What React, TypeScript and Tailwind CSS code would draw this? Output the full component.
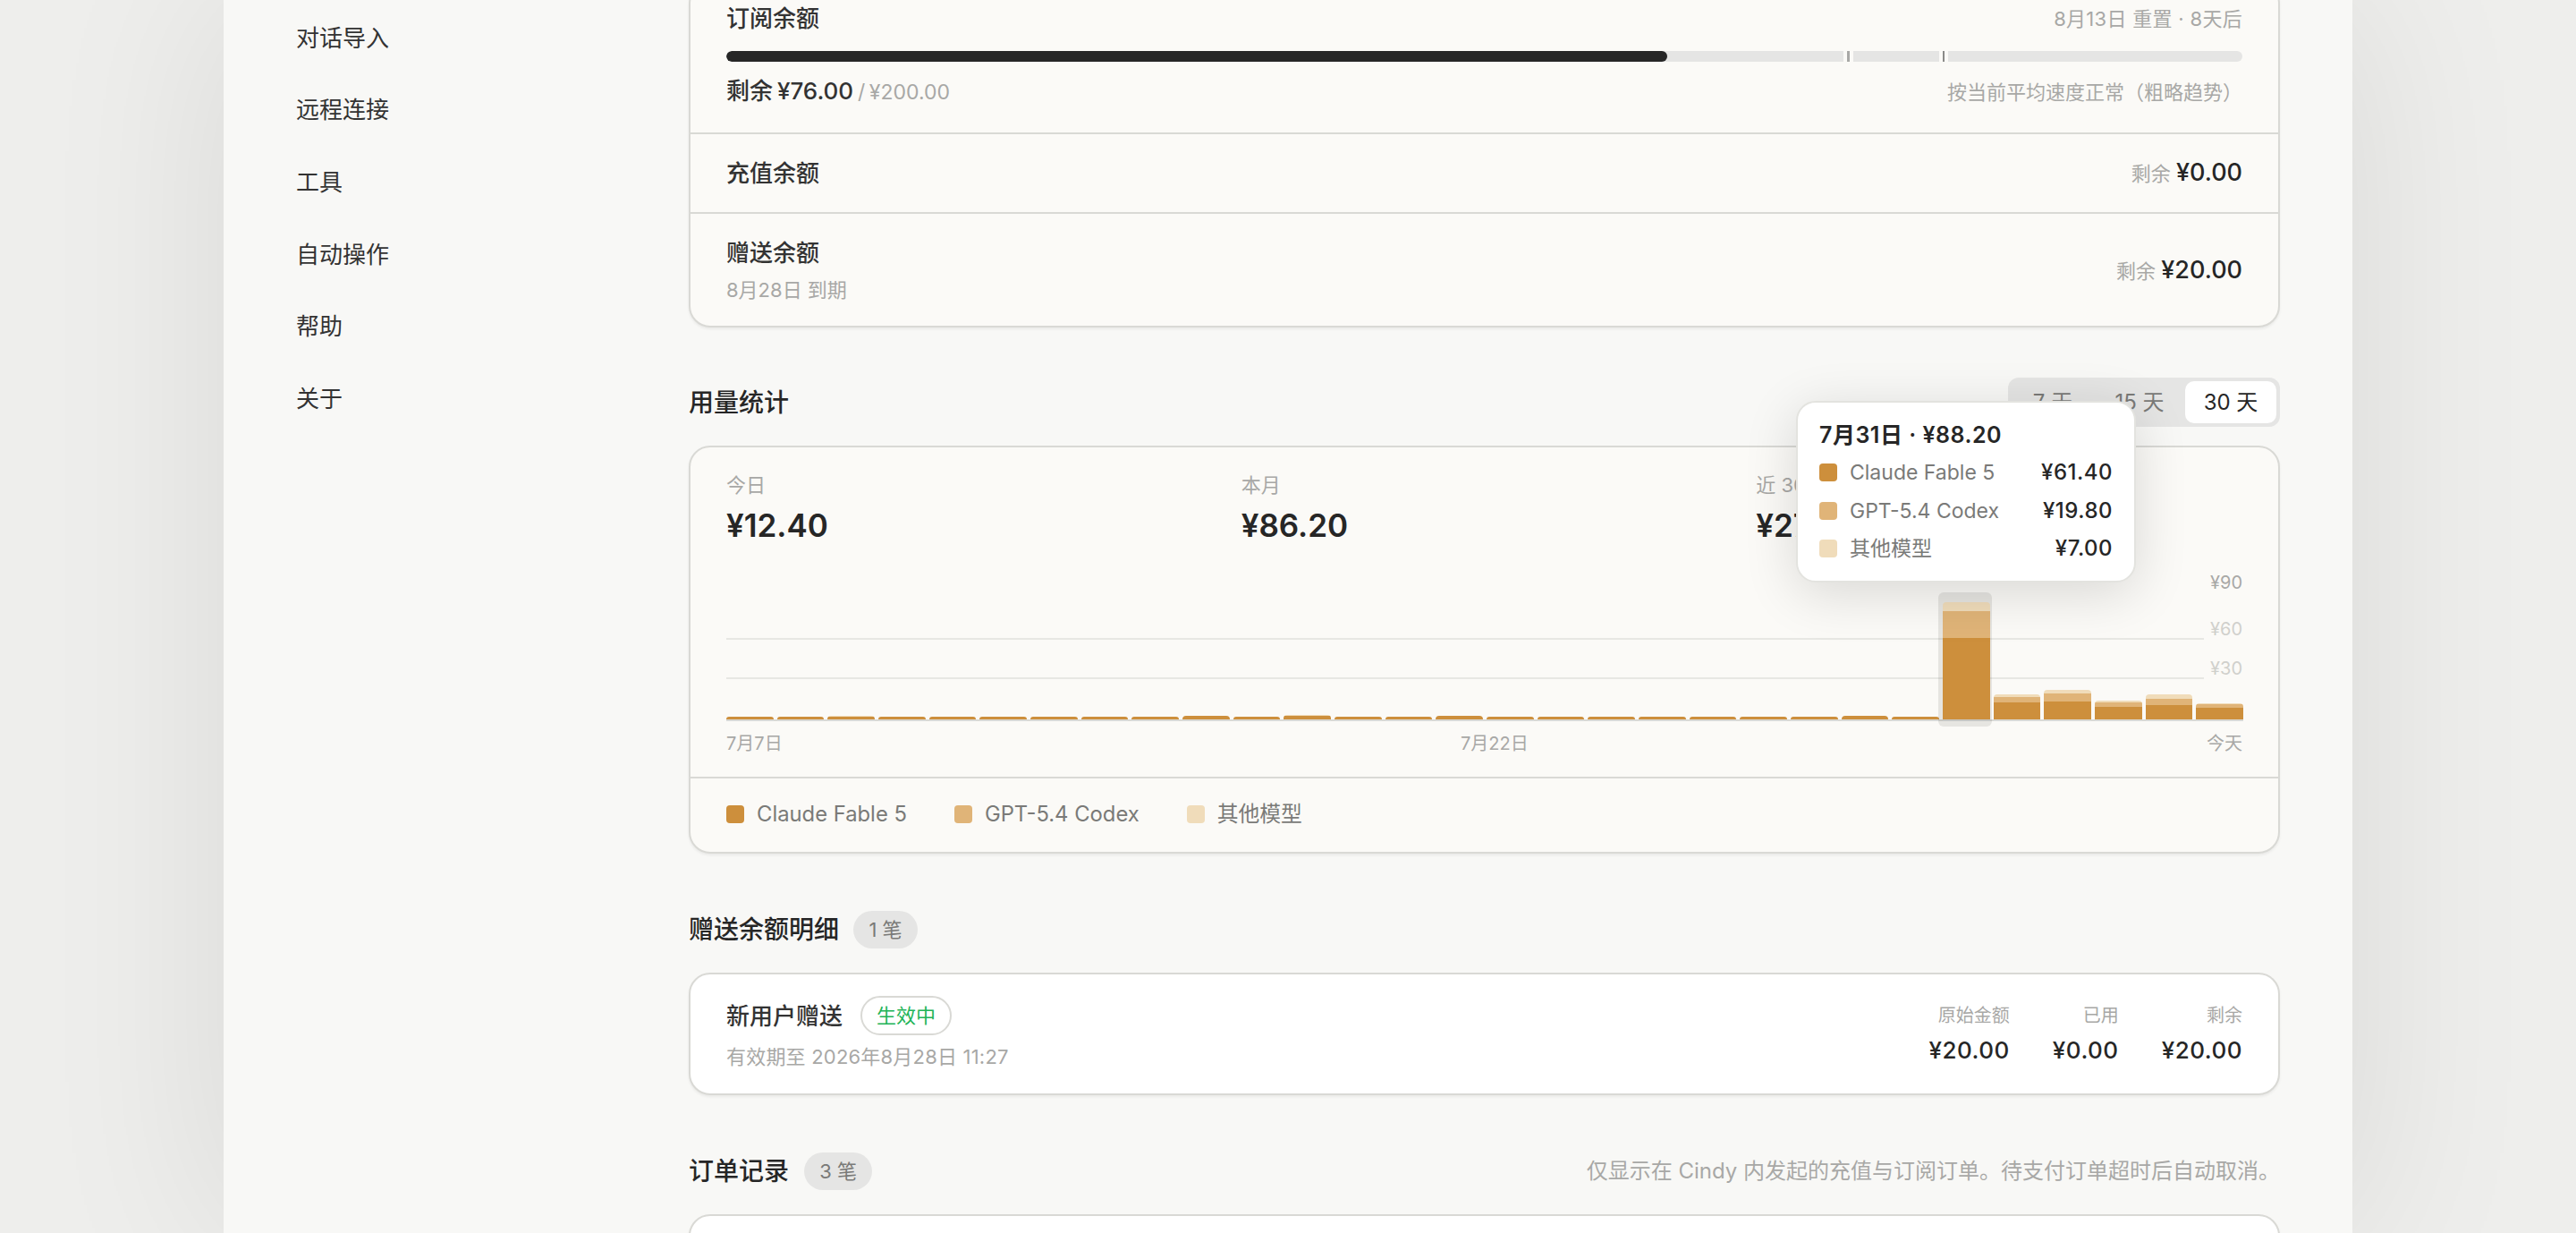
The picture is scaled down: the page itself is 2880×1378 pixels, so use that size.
import React from "react";

const navItems = ["对话导入", "远程连接", "工具", "自动操作", "帮助", "关于"];

// heights in px: claude, gpt, other
const dailyBars: number[][] = [
  [3, 0, 0], [3, 0, 0], [3, 0, 1.5], [3, 0, 0], [3, 0, 0], [3, 0, 0],
  [3, 0, 0], [3, 0, 0], [3, 0, 0], [4.5, 0, 0], [3, 0, 0], [4.5, 0, 1],
  [3, 0, 0], [3, 0, 0], [4.5, 0, 0], [3, 0, 0], [3, 0, 0], [3, 0, 0],
  [3, 0, 0], [3, 0, 0], [3, 0, 0], [3, 0, 0], [4.5, 0, 0], [3, 0, 0],
  [91, 30, 10], [19, 6, 3], [20, 9, 4], [14, 5, 2], [16, 7, 5], [13, 4, 1],
];

const legend = [
  { name: "Claude Fable 5", swatch: "bg-[#cd8f3c]", value: "¥61.40" },
  { name: "GPT-5.4 Codex", swatch: "bg-[#e0b478]", value: "¥19.80" },
  { name: "其他模型", swatch: "bg-[#f0dcba]", value: "¥7.00" },
];

const Card = ({ className = "", children }: { className?: string; children?: React.ReactNode }) => (
  <div className={`rounded-[24px] border-2 border-[#d9d9d5] shadow-[0_2px_3px_rgba(0,0,0,0.06)] ${className}`}>
    {children}
  </div>
);

const CountBadge = ({ text, width }: { text: string; width: string }) => (
  <span className={`flex h-[42px] items-center justify-center rounded-full bg-[#e5e5e4] text-[22px] text-[#7a7a78] ${width}`}>
    {text}
  </span>
);

const Stat = ({ label, value }: { label: string; value: string }) => (
  <div>
    <div className="text-[22px] leading-[30px] text-[#a8a8a6]">{label}</div>
    <div className="mt-[8px] text-[35px] font-semibold leading-[44px] text-[#262626]">{value}</div>
  </div>
);

const GiftColumn = ({ label, value }: { label: string; value: string }) => (
  <div className="text-right">
    <div className="text-[20px] leading-[30px] text-[#a8a8a6]">{label}</div>
    <div className="mt-[9px] text-[26px] font-medium leading-[30px] tracking-[0.5px] text-[#262626]">{value}</div>
  </div>
);

const UsageChart = () => (
  <div className="relative mt-[29px] h-[168px]">
    <div className="absolute left-0 right-[43px] top-[75px] h-[2px] bg-[#e7e7e3]" />
    <div className="absolute left-0 right-[43px] top-[119px] h-[2px] bg-[#e7e7e3]" />
    <span className="absolute right-0 top-[1px] text-[20px] leading-[24px] text-[#a8a8a6]">¥90</span>
    <span className="absolute right-0 top-[53px] text-[20px] leading-[24px] text-[#d0d0cc]">¥60</span>
    <span className="absolute right-0 top-[97px] text-[20px] leading-[24px] text-[#d0d0cc]">¥30</span>
    <div className="absolute inset-y-0 left-0 -right-[1px] flex items-end gap-[4px] border-b-2 border-[#d9d9d5]">
      {dailyBars.map((bar, i) => (
        <div key={i} className="relative flex-1">
          {i === 24 && (
            <div className="absolute -left-[5px] -right-[2px] -bottom-[8px] -top-[11px] rounded-[6px] bg-[#30342a]/[0.1]" />
          )}
          <div className="relative flex flex-col overflow-hidden rounded-t-[4px]">
            <div className="bg-[#f0dcba]" style={{ height: bar[2] }} />
            <div className="bg-[#e0b478]" style={{ height: bar[1] }} />
            <div className="bg-[#cd8f3c]" style={{ height: bar[0] }} />
          </div>
        </div>
      ))}
    </div>
  </div>
);

const UsageTooltip = () => (
  <div className="absolute left-[1758px] top-[448px] z-10 h-[203px] w-[380px] rounded-[22px] border-2 border-[#e3e3df] bg-white px-[24px] pt-[20px] shadow-[0_12px_60px_rgba(0,0,0,0.14)]">
    <div className="text-[25px] font-semibold leading-[32px] tracking-[0.5px] text-[#262626]">7月31日 · ¥88.20</div>
    <div className="mt-[5px] flex flex-col">
      {legend.map((item) => (
        <div key={item.name} className="flex h-[42.5px] items-center text-[23px]">
          <span className={`h-[20px] w-[20px] rounded-[4px] ${item.swatch}`} />
          <span className="ml-[14px] flex-1 text-[#7a7a78]">{item.name}</span>
          <span className="text-[24px] font-medium tracking-[0.5px] text-[#262626]">{item.value}</span>
        </div>
      ))}
    </div>
  </div>
);

export default function App() {
  return (
    <div className="h-[1378px] overflow-hidden bg-[#eeeeec] font-['Inter','Noto_Sans_CJK_SC',sans-serif]">
      <div className="relative ml-[250px] flex h-full w-[2380px] bg-[#f8f8f6] shadow-[0_0_200px_rgba(0,0,0,0.09)]">
        <nav className="w-[520px] pl-[81px] pt-[2px]">
          {navItems.map((item) => (
            <div key={item} className="flex h-[80.6px] items-center text-[26px] text-[#333333]">
              {item}
            </div>
          ))}
        </nav>

        <main className="-mt-[20px] w-[1779px]">
          <Card className="bg-[#fbfaf7]">
            <div className="px-[40px] pb-[27px] pt-[21px]">
              <div className="flex items-center justify-between leading-[36px]">
                <span className="text-[26px] font-medium text-[#333333]">订阅余额</span>
                <span className="text-[22px] tracking-[0.3px] text-[#a8a8a6]">8月13日 重置 · 8天后</span>
              </div>
              <div className="relative mt-[18px] flex h-[12px] overflow-hidden rounded-full bg-[#e5e5e4]">
                <div className="w-[1052px] rounded-full bg-[#262626]" />
                <span className="absolute left-[1249px] h-full w-[11px] bg-[#fbfaf7]" />
                <span className="absolute left-[1253px] h-full w-[3px] bg-[#a8a8a6]" />
                <span className="absolute left-[1356px] h-full w-[10px] bg-[#fbfaf7]" />
                <span className="absolute left-[1360px] h-full w-[2px] bg-[#8a8a88]" />
              </div>
              <div className="mt-[15px] flex items-center justify-between leading-[36px]">
                <span className="text-[26px] font-medium text-[#333333] [word-spacing:-2px]">
                  剩余 ¥76.00 <span className="text-[23px] font-normal text-[#a8a8a6]">/ ¥200.00</span>
                </span>
                <span className="text-[22px] text-[#a8a8a6]">按当前平均速度正常（粗略趋势）</span>
              </div>
            </div>
            <div className="flex h-[89px] items-center justify-between border-t-2 border-[#d9d9d5] px-[40px]">
              <span className="text-[26px] font-medium text-[#333333]">充值余额</span>
              <span className="text-[22px] text-[#a8a8a6]">
                剩余 <span className="text-[27px] font-medium text-[#262626]">¥0.00</span>
              </span>
            </div>
            <div className="flex items-center justify-between border-t-2 border-[#d9d9d5] px-[40px] pb-[25px] pt-[26px]">
              <div>
                <div className="text-[26px] font-medium leading-[36px] text-[#333333]">赠送余额</div>
                <div className="mt-[8px] text-[22px] leading-[30px] text-[#a8a8a6]">8月28日 到期</div>
              </div>
              <span className="text-[22px] text-[#a8a8a6]">
                剩余 <span className="text-[27px] font-medium text-[#262626]">¥20.00</span>
              </span>
            </div>
          </Card>

          <div className="mt-[56px] flex h-[55px] items-center justify-between">
            <h2 className="text-[28px] font-medium text-[#262626]">用量统计</h2>
            <div className="flex h-[55px] w-[304px] items-center rounded-[12px] bg-[#e5e5e4] p-[4px] text-[24px] text-[#7a7a78]">
              <span className="w-[92px] text-center">7 天</span>
              <span className="w-[102px] text-center">15 天</span>
              <span className="flex h-[47px] w-[102px] items-center justify-center rounded-[10px] bg-white text-[#262626]">30 天</span>
            </div>
          </div>

          <Card className="mt-[21px] bg-[#fbfaf7]">
            <div className="px-[40px] pt-[27px]">
              <div className="grid grid-cols-3 gap-[32px]">
                <Stat label="今日" value="¥12.40" />
                <Stat label="本月" value="¥86.20" />
                <Stat label="近 30 天" value="¥274.60" />
              </div>
              <UsageChart />
              <div className="mt-[11px] flex h-[51px] items-start justify-between text-[20px] leading-[28px] text-[#a8a8a6]">
                <span>7月7日</span>
                <span>7月22日</span>
                <span>今天</span>
              </div>
            </div>
            <div className="flex h-[84px] items-center gap-[53px] border-t-2 border-[#d9d9d5] px-[40px] pb-[2px] text-[23.8px] text-[#7a7a78]">
              {legend.map((item) => (
                <div key={item.name} className="flex items-center gap-[14px]">
                  <span className={`h-[20px] w-[20px] rounded-[4px] ${item.swatch}`} />
                  {item.name}
                </div>
              ))}
            </div>
          </Card>

          <div className="mt-[64px] flex h-[42px] items-center gap-[16px]">
            <h2 className="text-[28px] font-medium text-[#262626]">赠送余额明细</h2>
            <CountBadge text="1 笔" width="w-[72px]" />
          </div>

          <Card className="mt-[27px] flex h-[137px] items-center justify-between bg-white px-[40px] pb-[2px]">
            <div>
              <div className="flex h-[44px] items-center gap-[20px]">
                <span className="text-[26px] font-medium text-[#333333]">新用户赠送</span>
                <span className="flex h-[44px] w-[102px] items-center justify-center rounded-full border-2 border-[#d9d9d5] text-[22px] text-[#22b457]">
                  生效中
                </span>
              </div>
              <div className="mt-[9px] text-[22px] leading-[30px] tracking-[0.2px] text-[#a8a8a6]">有效期至 2026年8月28日 11:27</div>
            </div>
            <div className="flex gap-[48px]">
              <GiftColumn label="原始金额" value="¥20.00" />
              <GiftColumn label="已用" value="¥0.00" />
              <GiftColumn label="剩余" value="¥20.00" />
            </div>
          </Card>

          <div className="mt-[64px] flex h-[42px] items-center justify-between">
            <div className="flex items-center gap-[17px]">
              <h2 className="text-[28px] font-medium text-[#262626]">订单记录</h2>
              <CountBadge text="3 笔" width="w-[76px]" />
            </div>
            <span className="text-[24px] text-[#a8a8a6]">仅显示在 Cindy 内发起的充值与订阅订单。待支付订单超时后自动取消。</span>
          </div>

          <Card className="mt-[27px] h-[200px] bg-white" />
        </main>

        <UsageTooltip />
      </div>
    </div>
  );
}
